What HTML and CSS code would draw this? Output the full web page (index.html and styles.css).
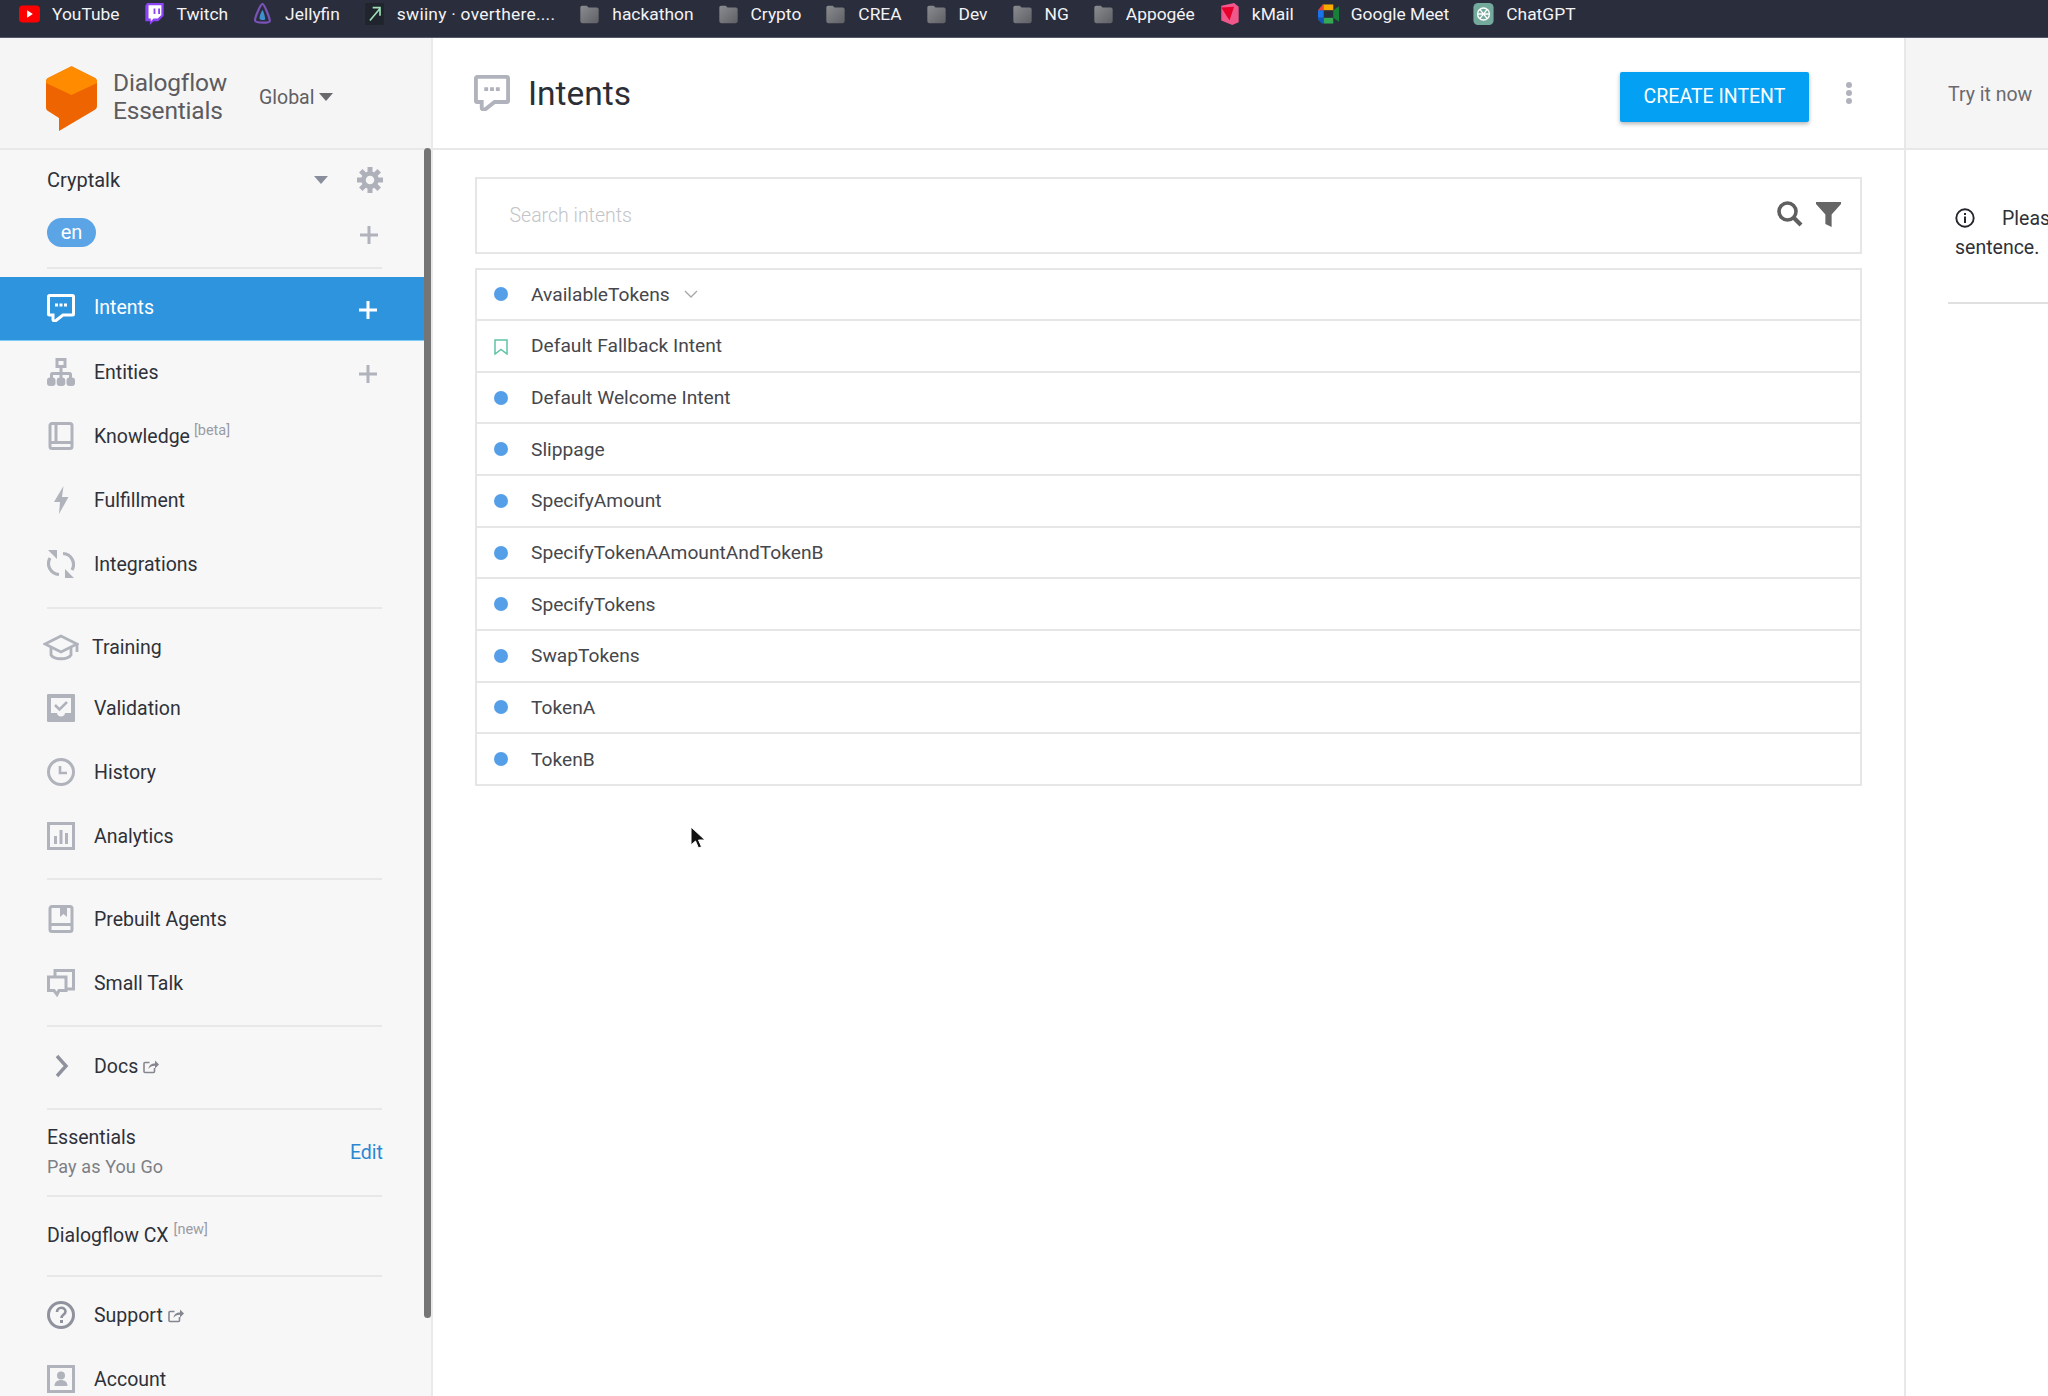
FILE: index.html
```html
<!DOCTYPE html>
<html lang="en">
<head>
<meta charset="utf-8">
<title>Dialogflow Essentials - Intents</title>
<link rel="stylesheet" href="styles.css">
</head>
<body>
<nav class="bookmarks">
  <a class="bm"><svg class="bm-ic" viewBox="0 0 22 18"><rect width="22" height="18" y="0" rx="4" fill="#f00"/><path d="M8.5 5l6 4-6 4z" fill="#fff"/></svg>YouTube</a>
  <a class="bm"><svg class="bm-ic" viewBox="0 0 20 24"><path d="M2 0h18v14l-6 6H9l-4 4v-4H0V3z" fill="#8b45f5"/><path d="M3.5 2.5h14V13l-4 4H9l-3 3v-3H3.500z" fill="#fff"/><path d="M9 6h2v6H9zM14 6h2v6h-2z" fill="#8b45f5"/></svg>Twitch</a>
  <a class="bm"><svg class="bm-ic" viewBox="0 0 20 24"><path d="M10 1C8 1 1 17 2 19.500S18 22 18 19.500 12 1 10 1z" fill="none" stroke="#7a52b8" stroke-width="2.400"/><path d="M10 8c-1 0-4 8-3 9.500s6 1.500 6 0S11 8 10 8z" fill="#3f8fd0"/></svg>Jellyfin</a>
  <a class="bm bm-swiiny"><svg class="bm-ic" viewBox="0 0 20 24"><rect width="20" height="24" fill="#20242c"/><path d="M5 19L16 6M8 5h8v9" fill="none" stroke="#9fe0b8" stroke-width="1.800"/></svg>swiiny · overthere....</a>
  <a class="bm"><svg class="bm-ic" viewBox="0 0 22 24"><use href="#folder"/></svg>hackathon</a>
  <a class="bm"><svg class="bm-ic" viewBox="0 0 22 24"><use href="#folder"/></svg>Crypto</a>
  <a class="bm"><svg class="bm-ic" viewBox="0 0 22 24"><use href="#folder"/></svg>CREA</a>
  <a class="bm"><svg class="bm-ic" viewBox="0 0 22 24"><use href="#folder"/></svg>Dev</a>
  <a class="bm"><svg class="bm-ic" viewBox="0 0 22 24"><use href="#folder"/></svg>NG</a>
  <a class="bm"><svg class="bm-ic" viewBox="0 0 22 24"><use href="#folder"/></svg>Appogée</a>
  <a class="bm"><svg class="bm-ic" viewBox="0 0 20 24"><path d="M1 3l14-3 5 4v17l-7 3-12-5z" fill="#f0588c"/><path d="M1 5l14-1-5 15z" fill="#e8002d"/></svg>kMail</a>
  <a class="bm"><svg class="bm-ic" viewBox="0 0 22 22"><path d="M5 1h11v6H5z" fill="#f9ab00"/><path d="M0 7h6v8H0z" fill="#1a73e8"/><path d="M0 15h6v6H4l-4-4z" fill="#1257b8"/><path d="M6 15h10v6H6z" fill="#34a853"/><path d="M16 1v6l6-4v16l-6-4v6z" fill="#188038"/><path d="M0 7l5-6h1v6z" fill="#ea4335"/></svg>Google Meet</a>
  <a class="bm"><svg class="bm-ic" viewBox="0 0 22 24"><rect width="22" height="24" rx="5" fill="#74aa9c"/><g fill="none" stroke="#fff" stroke-width="1.500"><circle cx="11" cy="12" r="6.500"/><path d="M7 7l8 10M15 7l-8 10M4.500 12h13"/></g></svg>ChatGPT</a>
</nav>

<svg class="defs" width="0" height="0" aria-hidden="true">
  <defs>
    <linearGradient id="fg" x1="0" y1="0" x2="1" y2="1"><stop offset="0" stop-color="#8b8c90"/><stop offset="1" stop-color="#5f6065"/></linearGradient>
    <symbol id="folder" viewBox="0 0 22 24"><path d="M1 5a2 2 0 0 1 2-2h5l2 2h9a2 2 0 0 1 2 2v13a2 2 0 0 1-2 2H3a2 2 0 0 1-2-2z" fill="url(#fg)"/></symbol>
    <symbol id="ext" viewBox="0 0 16 15"><path d="M11.500 9v3.500a1 1 0 0 1-1 1H2a1 1 0 0 1-1-1V4.500a1 1 0 0 1 1-1h4.500" fill="none" stroke="currentColor" stroke-width="1.600"/><path d="M5.500 10c.5-4 3-5.500 6.500-5.500V1.500L16 5.500 12 9.500V6.800c-3 0-5 1-6.500 3.200z" fill="currentColor"/></symbol>
    <symbol id="chat" viewBox="0 0 28 28"><path d="M2.500 1.500h23a1 1 0 0 1 1 1V20a1 1 0 0 1-1 1H16l-7 5.500c-1.500.8-3 .4-3-1V21H2.500a1 1 0 0 1-1-1V2.500a1 1 0 0 1 1-1z" fill="none" stroke="currentColor" stroke-width="3"/><path d="M8 9.500h3v3H8zM12.500 9.500h3v3h-3zM17 9.500h3v3h-3z" fill="currentColor"/></symbol>
    <symbol id="plus" viewBox="0 0 20 20"><path d="M8.500 1h3v7.500H19v3h-7.500V19h-3v-7.500H1v-3h7.500z" fill="currentColor"/></symbol>
  </defs>
</svg>

<div class="app">
  <aside class="sidebar">
    <header class="brand">
      <svg class="logo" viewBox="0 0 51 65"><path d="M23 1.500a4 4 0 0 1 5 0L49 12c1.500 1 2 2 2 4v24c0 2-1 3-2.500 4L13 65V52L2 45c-1.500-1-2-2-2-4V16c0-2 .5-3 2-4z" fill="#ee6400"/><path d="M23 1.500a4 4 0 0 1 5 0L49 12c1.500 1 2 2 2 4v1L25.500 29 0 17v-1c0-2 .5-3 2-4z" fill="#ff8c00"/></svg>
      <div class="brand-name">Dialogflow<br>Essentials</div>
      <div class="region">Global<span class="caret caret-dark"></span></div>
    </header>

    <section class="agent">
      <div class="agent-row">
        <span class="agent-name">Cryptalk</span>
        <span class="caret caret-agent"></span>
        <svg class="gear" viewBox="0 0 28 28"><circle cx="14" cy="14" r="6.500" fill="none" stroke="currentColor" stroke-width="4.500"/><g stroke="currentColor" stroke-width="5"><path d="M14 1v6M14 21v6M1 14h6M21 14h6M4.800 4.800l4.200 4.200M19 19l4.200 4.200M23.200 4.800L19 9M9 19l-4.200 4.200"/></g></svg>
      </div>
      <div class="lang-row">
        <span class="pill">en</span>
        <svg class="plus-sm"><use href="#plus"/></svg>
      </div>
      <div class="rule rule-agent"></div>
    </section>

    <a class="nav nav-active nav-up"><svg class="ic"><use href="#chat"/></svg><span>Intents</span><svg class="plus"><use href="#plus"/></svg></a>
    <a class="nav nav-up"><svg class="ic" viewBox="0 0 28 28"><g fill="none" stroke="currentColor" stroke-width="3"><rect x="10" y="1.500" width="8" height="7"/><path d="M14 9v6M4.500 20v-3.500a1 1 0 0 1 1-1h17a1 1 0 0 1 1 1V20M14 15v5"/></g><g fill="currentColor"><rect x="0" y="19.500" width="8.500" height="8.500" rx="3"/><rect x="9.750" y="19.500" width="8.500" height="8.500" rx="3"/><rect x="19.500" y="19.500" width="8.500" height="8.500" rx="3"/></g></svg><span>Entities</span><svg class="plus plus-grey"><use href="#plus"/></svg></a>
    <a class="nav nav-up"><svg class="ic" viewBox="0 0 28 28"><path d="M5 1.500h18a2 2 0 0 1 2 2v21a2 2 0 0 1-2 2H5a2 2 0 0 1-2-2v-21a2 2 0 0 1 2-2zM9 2v18M3 20.500h22" fill="none" stroke="currentColor" stroke-width="3"/></svg><span>Knowledge<sup class="tag">[beta]</sup></span></a>
    <a class="nav nav-up"><svg class="ic" viewBox="0 0 28 28"><path d="M16.500 0L7 16h6l-1 12 9.500-17H15z" fill="currentColor"/></svg><span>Fulfillment</span></a>
    <a class="nav nav-up"><svg class="ic" viewBox="0 0 28 28"><path d="M16 3.500A11 11 0 0 1 25 20M12 24.500A11 11 0 0 1 3 8" fill="none" stroke="currentColor" stroke-width="3.200"/><path d="M1 0l9 0v9zM27 28h-9v-9z" fill="currentColor"/></svg><span>Integrations</span></a>
    <div class="rule"></div>
    <a class="nav nav-training"><svg class="ic ic-wide" viewBox="0 0 36 28"><path d="M18 2L2 10l16 8 16-8z" fill="none" stroke="currentColor" stroke-width="2.800"/><path d="M8 14v7c3 5 17 5 20 0v-7M34 10v8" fill="none" stroke="currentColor" stroke-width="2.800"/></svg><span>Training</span></a>
    <a class="nav"><svg class="ic" viewBox="0 0 28 28"><path fill="currentColor" fill-rule="evenodd" d="M1 0h26a1 1 0 0 1 1 1v26a1 1 0 0 1-1 1H1a1 1 0 0 1-1-1V1a1 1 0 0 1 1-1zm3 4v15h6c0 2 2 3.500 4 3.500s4-1.500 4-3.500h6V4z"/><path d="M8 11l4.500 4.500L20 8" fill="none" stroke="currentColor" stroke-width="2.600"/></svg><span>Validation</span></a>
    <a class="nav"><svg class="ic" viewBox="0 0 28 28"><circle cx="14" cy="14" r="12.500" fill="none" stroke="currentColor" stroke-width="3"/><path d="M13 8v7h7" fill="none" stroke="currentColor" stroke-width="2.600"/></svg><span>History</span></a>
    <a class="nav"><svg class="ic" viewBox="0 0 28 28"><rect x="1.500" y="1.500" width="25" height="25" fill="none" stroke="currentColor" stroke-width="3"/><path d="M7 14h3v8H7zM12.500 8h3v14h-3zM18 11h3v11h-3z" fill="currentColor"/></svg><span>Analytics</span></a>
    <div class="rule"></div>
    <a class="nav"><svg class="ic" viewBox="0 0 28 28"><path d="M5 1.500h18a2 2 0 0 1 2 2v21a2 2 0 0 1-2 2H5a2 2 0 0 1-2-2v-21a2 2 0 0 1 2-2zM3 19.500h22" fill="none" stroke="currentColor" stroke-width="3"/><path d="M13 2h7v10l-3.500-3L13 12z" fill="currentColor"/></svg><span>Prebuilt Agents</span></a>
    <a class="nav"><svg class="ic" viewBox="0 0 28 28"><path d="M8 7V1.500h18.500V20H20" fill="none" stroke="currentColor" stroke-width="3"/><path d="M1.500 8h17.500v13.500h-7l-2 4-3-4H1.500z" fill="none" stroke="currentColor" stroke-width="3"/></svg><span>Small Talk</span></a>
    <div class="rule"></div>
    <a class="nav"><svg class="ic ic-dark" viewBox="0 0 28 28"><path d="M10 4l9 10-9 10" fill="none" stroke="currentColor" stroke-width="3.400"/></svg><span>Docs<svg class="ext"><use href="#ext"/></svg></span></a>
    <div class="rule rule-docs"></div>
    <div class="plan">
      <div><div class="plan-name">Essentials</div><div class="plan-sub">Pay as You Go</div></div>
      <a class="edit">Edit</a>
    </div>
    <div class="rule rule-flush"></div>
    <div class="cx"><span>Dialogflow CX<sup class="tag tag-new">[new]</sup></span></div>
    <div class="rule rule-flush"></div>
    <a class="nav nav-support"><svg class="ic ic-dark" viewBox="0 0 28 28"><circle cx="14" cy="14" r="12.500" fill="none" stroke="currentColor" stroke-width="3"/><path d="M10 11c0-5.500 8.500-5.500 8.500-.5 0 3-4 3-4 6.500" fill="none" stroke="currentColor" stroke-width="2.600"/><rect x="13" y="19" width="3" height="3" fill="currentColor"/></svg><span>Support<svg class="ext"><use href="#ext"/></svg></span></a>
    <a class="nav"><svg class="ic" viewBox="0 0 28 28"><rect x="1.500" y="1.500" width="25" height="25" fill="none" stroke="currentColor" stroke-width="3"/><circle cx="14" cy="10.500" r="4" fill="currentColor"/><path d="M7.500 21c0-4 3-6 6.500-6s6.500 2 6.500 6z" fill="currentColor"/></svg><span>Account</span></a>
    <div class="scrollbar"></div>
  </aside>

  <main class="main">
    <header class="topbar">
      <svg class="title-ic"><use href="#chat"/></svg>
      <h1 class="title">Intents</h1>
      <button class="create">CREATE INTENT</button>
      <span class="kebab"><i></i><i></i><i></i></span>
    </header>
    <div class="content">
      <div class="search">
        <span class="placeholder">Search intents</span>
        <svg class="search-ic" viewBox="0 0 26 26"><circle cx="10.500" cy="10.500" r="8.500" fill="none" stroke="currentColor" stroke-width="3.600"/><path d="M16.500 16.500L24 24" stroke="currentColor" stroke-width="4.200" fill="none"/></svg>
        <svg class="filter-ic" viewBox="0 0 24 24"><path d="M0 0h24v2L15 12v12l-6-3v-9L0 2z" fill="currentColor"/></svg>
      </div>
      <ul class="list">
        <li class="row"><i class="dot"></i><span>AvailableTokens</span><svg class="chev" viewBox="0 0 14 8"><path d="M1 1l6 6 6-6" fill="none" stroke="currentColor" stroke-width="1.400"/></svg></li>
        <li class="row"><svg class="mark" viewBox="0 0 14 16"><path d="M1 1h12v14l-6-4.500L1 15z" fill="none" stroke="#5fc3a6" stroke-width="1.500"/></svg><span>Default Fallback Intent</span></li>
        <li class="row"><i class="dot"></i><span>Default Welcome Intent</span></li>
        <li class="row"><i class="dot"></i><span>Slippage</span></li>
        <li class="row"><i class="dot"></i><span>SpecifyAmount</span></li>
        <li class="row"><i class="dot"></i><span>SpecifyTokenAAmountAndTokenB</span></li>
        <li class="row"><i class="dot"></i><span>SpecifyTokens</span></li>
        <li class="row"><i class="dot"></i><span>SwapTokens</span></li>
        <li class="row"><i class="dot"></i><span>TokenA</span></li>
        <li class="row"><i class="dot"></i><span>TokenB</span></li>
      </ul>
    </div>
    <svg class="cursor" viewBox="0 0 16 24"><path d="M1 1v18l4.500-4 3 7 3-1.300-3-6.700H15z" fill="#111" stroke="#fff" stroke-width="1"/></svg>
  </main>

  <aside class="console">
    <div class="try">Try it now</div>
    <div class="hint">
      <p class="hint-text"><svg class="info" viewBox="0 0 20 20"><circle cx="10" cy="10" r="8.700" fill="none" stroke="currentColor" stroke-width="1.900"/><path d="M9 8.500h2V15H9zM9 5h2v2H9z" fill="currentColor"/></svg>Please use test console above to try a sentence.</p>
    </div>
    <div class="console-rule"></div>
  </aside>
</div>
</body>
</html>
```

FILE: styles.css
```css
* { box-sizing: border-box; }
html, body { margin: 0; height: 1396px; overflow: hidden; background: #fff; }
body { font-family: Roboto, "Liberation Sans", sans-serif; color: #2f3138; font-size: 19.500px; }
a { color: inherit; text-decoration: none; }
.defs { position: absolute; }

.bookmarks { height: 37.500px; background: #2a2d3c; border-bottom: 1px solid #55586a; display: flex; align-items: center; padding: 0 0 9px 19px; gap: 24px; color: #f3f3f5; font-size: 17.400px; white-space: nowrap; overflow: hidden; }
.bm { display: flex; align-items: center; gap: 12px; }
.bm-ic { width: 21px; height: 22px; flex: none; }
.bm-swiiny { letter-spacing: .25px; }

.app { display: flex; height: 1358.500px; overflow: hidden; }

.sidebar { position: relative; width: 433px; flex: none; background: #f7f7f8; border-right: 2px solid #eaeaea; overflow: hidden; }
.brand { height: 112px; border-bottom: 2px solid #e8e8e8; background: #f5f5f5; display: flex; align-items: center; padding: 8px 0 0 46px; }
.logo { width: 51px; height: 65px; flex: none; margin-top: 4px; }
.brand-name { margin: 0 0 0 16px; width: 146px; font-size: 24.500px; line-height: 27.500px; color: #5c5c60; letter-spacing: -.2px; }
.region { display: flex; align-items: center; gap: 5px; color: #5f6063; font-size: 19.500px; margin-top: 1px; }
.caret { width: 0; height: 0; display: inline-block; border-left: 7.500px solid transparent; border-right: 7.500px solid transparent; border-top: 8px solid #6a6a6e; }

.agent { height: 127.500px; padding: 12px 49px 0 47px; display: flex; flex-direction: column; }
.agent-row { display: flex; align-items: center; height: 36px; }
.agent-name { flex: 1; font-size: 20px; }
.caret-agent { border-top-color: #8a8e9c; border-left-width: 7px; border-right-width: 7px; margin-right: 28px; }
.gear { width: 28px; height: 28px; color: #aeb1ba; margin-right: -2px; }
.lang-row { display: flex; align-items: center; justify-content: space-between; margin-top: 20px; height: 29px; }
.pill { width: 49px; height: 29px; border-radius: 15px; background: #5ba4e6; color: #fff; font-size: 20px; display: flex; align-items: center; justify-content: center; }
.plus-sm { width: 20px; height: 20px; color: #b0b3bc; margin: 6px 3px 0 0; }
.rule { height: 2px; background: #e8e8e9; margin: 10px 49px 0 47px; flex: none; }
.rule-agent { margin: 20px 0 0; }
.rule-docs { margin-top: 10px; }
.rule-flush { margin-top: 0; }

.nav { height: 64px; display: flex; align-items: center; padding-left: 47px; gap: 19px; position: relative; }
.nav-up { padding-bottom: 2px; }
.nav-active { background: #2f94de; color: #fff; width: 424px; border-bottom: 1px solid #7fcdf5; }
.ic { width: 28px; height: 28px; flex: none; color: #b0b3bc; }
.nav-active .ic { color: #fff; }
.ic-dark { color: #8f929d; }
.ic-wide { width: 36px; margin-left: -4px; margin-right: -4px; }
.nav-training { height: 68px; padding-top: 11px; margin-top: -1px; gap: 17px; }
.nav-support { margin-top: 6px; }
.plus { position: absolute; right: 46px; top: 23px; width: 20px; height: 20px; color: #fff; }
.plus-grey { color: #b0b3bc; right: 53px; }
.tag { font-size: 14.500px; color: #9a9ca4; margin-left: 4px; vertical-align: 8px; line-height: 0; }
.tag-new { margin-left: 5px; }
.ext { width: 16px; height: 15px; margin-left: 5px; color: #85878f; vertical-align: -1px; }

.rule + .nav:not(.nav-training):not(.nav-support) { margin-top: 7px; }
.plan { height: 85px; margin: 0 49px 0 47px; display: flex; justify-content: space-between; align-items: center; }
.plan-name { font-size: 19.500px; line-height: 26px; }
.plan-sub { font-size: 18px; line-height: 26px; color: #7d7f85; letter-spacing: .1px; margin-top: 3px; }
.edit { color: #2b88d0; font-size: 19.500px; margin-right: -1px; }
.cx { height: 78px; padding: 0 0 2px 47px; display: flex; align-items: center; }
.scrollbar { position: absolute; left: 424px; top: 110.500px; width: 7px; height: 1170px; background: #757575; border-radius: 4px; }

.main { position: relative; width: 1471px; flex: none; }
.topbar { height: 112px; border-bottom: 2px solid #e8e8e8; display: flex; align-items: center; padding: 0 0 0 41px; }
.title-ic { width: 36px; height: 36px; color: #b0b3bc; margin-top: 0; }
.title { font-size: 33.500px; font-weight: 400; margin: 2px 0 0 18px; flex: 1; color: #2c2e36; }
.create { width: 189px; height: 50px; margin: 8px 0 0; border: 0; border-radius: 2px; background: #03a0f4; color: #fff; font: 400 19.500px Roboto, sans-serif; box-shadow: 0 2px 4px rgba(0,0,0,.3); }
.kebab { display: flex; flex-direction: column; gap: 2px; margin: 0 52px 0 37px; }
.kebab i { width: 6px; height: 6px; border-radius: 50%; background: #b0b3bc; display: block; }

.content { padding: 27px 42px 0 41.500px; }
.search { height: 77px; border: 2px solid #e6e6e6; display: flex; align-items: center; padding: 0 19px 0 33px; }
.placeholder { flex: 1; color: #c3c4c8; font-size: 19.500px; font-weight: 300; }
.search-ic { width: 26px; height: 26px; color: #5f5f5f; margin: -2px 13px 0 0; }
.filter-ic { width: 25px; height: 25px; color: #666; margin-top: -2px; }
.list { list-style: none; margin: 14px 0 0; padding: 0; border: 2px solid #e6e6e6; border-bottom-width: 0; }
.row { height: 51.650px; border-bottom: 2px solid #e6e6e6; display: flex; align-items: center; padding-left: 17px; color: #46474c; font-size: 19.200px; }
.row > span { margin-left: 23.500px; }
.dot { width: 14px; height: 14px; border-radius: 50%; background: #559fe8; flex: none; }
.mark { width: 14px; height: 16px; flex: none; margin-top: 3px; }
.chev { width: 14px; height: 8px; color: #a8a8a8; margin-left: 14px; }
.cursor { position: absolute; left: 257px; top: 788px; width: 16px; height: 24px; }

.console { flex: 1; min-width: 0; border-left: 2px solid #e8e8e8; overflow: hidden; }
.try { height: 112px; background: #f5f5f5; border-bottom: 2px solid #e8e8e8; padding: 45px 0 0 42px; line-height: 24px; color: #6a6a6e; font-size: 19.500px; white-space: nowrap; }
.hint { padding: 0 0 0 49px; width: 506px; }
.hint-text { margin: 54px 0 0; line-height: 29px; font-size: 19.500px; color: #2f3138; }
.info { width: 20px; height: 20px; margin: 0 27px 0 0; vertical-align: -3px; color: #24262c; }
.console-rule { height: 2px; background: #e0e0e0; margin: 40px 0 0 42px; }
```
